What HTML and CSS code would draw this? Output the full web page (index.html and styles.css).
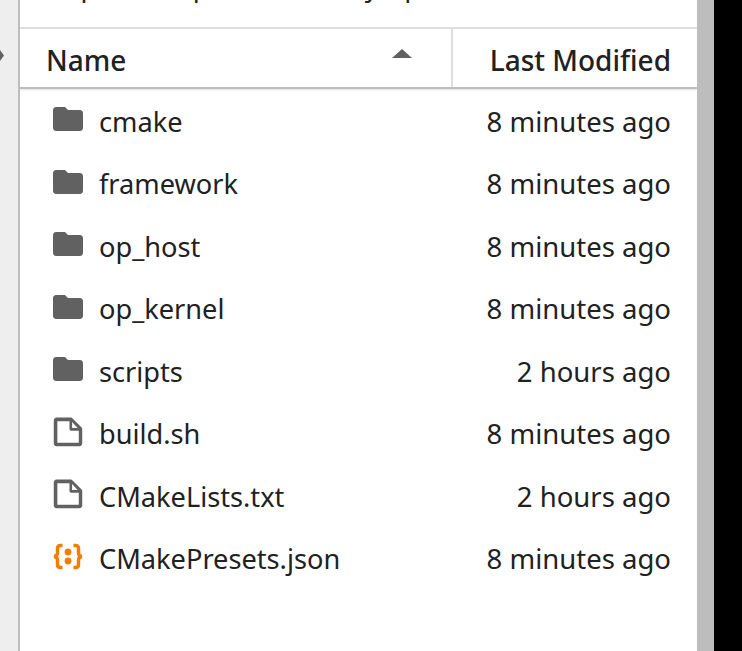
FILE: index.html
```html
<!DOCTYPE html>
<html lang="en">
<head>
    <meta charset="UTF-8">
    <title>File Browser</title>
    <link rel="stylesheet" href="styles.css">
</head>
<body>
    <svg class="icon-defs" width="0" height="0">
        <symbol id="icon-folder" viewBox="0 0 24 24">
            <path d="M10 4H4c-1.1 0-1.99.9-1.99 2L2 18c0 1.1.9 2 2 2h16c1.1 0 2-.9 2-2V8c0-1.1-.9-2-2-2h-8l-2-2z"/>
        </symbol>
        <symbol id="icon-file" viewBox="0 0 22 22">
            <path d="M19.3 8.2l-5.5-5.5c-.3-.3-.7-.5-1.2-.5H3.9c-.8.1-1.6.9-1.6 1.8v14.1c0 .9.7 1.6 1.6 1.6h14.2c.9 0 1.6-.7 1.6-1.6V9.4c.1-.5-.1-.9-.4-1.2zm-5.8-3.3l3.4 3.6h-3.4V4.9zm3.9 12.7H4.7c-.1 0-.2 0-.2-.2V4.7c0-.2.1-.3.2-.3h7.2v4.400s0 .8.3 1.1c.3.3 1.1.3 1.1.3h4.3v7.2s-.1.2-.2.2z"/>
        </symbol>
        <symbol id="icon-json" viewBox="0 0 36 36">
            <path class="brace" d="M12.500 6.500H10.500c-2 0-3 1.100-3 3v4.200c0 2.100-1.100 3.600-3.500 3.800 2.400.2 3.500 1.700 3.500 3.800v4.200c0 1.900 1 3 3 3h2"/>
            <path class="brace" d="M23.500 6.500h2c2 0 3 1.100 3 3v4.200c0 2.100 1.100 3.600 3.500 3.800-2.400.2-3.500 1.700-3.500 3.800v4.200c0 1.900-1 3-3 3h-2"/>
            <circle cx="18" cy="13" r="3.400"/>
            <circle cx="18" cy="22" r="3.400"/>
        </symbol>
    </svg>

    <div class="sidebar">
        <span class="collapse-arrow"></span>
    </div>

    <div class="browser">
        <div class="breadcrumbs">
            <div class="crumb-text">/ op / examples / memory / p</div>
        </div>

        <div class="list-header">
            <div class="col-name">
                <span>Name</span>
                <span class="sort-caret"></span>
            </div>
            <div class="col-modified">Last Modified</div>
        </div>

        <ul class="file-list">
            <li class="file-row">
                <svg class="file-icon"><use href="#icon-folder"/></svg>
                <span class="file-name">cmake</span>
                <span class="file-date">8 minutes ago</span>
            </li>
            <li class="file-row">
                <svg class="file-icon"><use href="#icon-folder"/></svg>
                <span class="file-name">framework</span>
                <span class="file-date">8 minutes ago</span>
            </li>
            <li class="file-row">
                <svg class="file-icon"><use href="#icon-folder"/></svg>
                <span class="file-name">op_host</span>
                <span class="file-date">8 minutes ago</span>
            </li>
            <li class="file-row">
                <svg class="file-icon"><use href="#icon-folder"/></svg>
                <span class="file-name">op_kernel</span>
                <span class="file-date">8 minutes ago</span>
            </li>
            <li class="file-row">
                <svg class="file-icon"><use href="#icon-folder"/></svg>
                <span class="file-name">scripts</span>
                <span class="file-date">2 hours ago</span>
            </li>
            <li class="file-row">
                <svg class="file-icon"><use href="#icon-file"/></svg>
                <span class="file-name">build.sh</span>
                <span class="file-date">8 minutes ago</span>
            </li>
            <li class="file-row">
                <svg class="file-icon"><use href="#icon-file"/></svg>
                <span class="file-name">CMakeLists.txt</span>
                <span class="file-date">2 hours ago</span>
            </li>
            <li class="file-row">
                <svg class="file-icon icon-orange"><use href="#icon-json"/></svg>
                <span class="file-name">CMakePresets.json</span>
                <span class="file-date">8 minutes ago</span>
            </li>
        </ul>
    </div>

    <div class="scrollbar"></div>
    <div class="outside"></div>
</body>
</html>
```

FILE: styles.css
```css
html, body {
    height: 100%;
}
body {
    margin: 0;
    display: flex;
    overflow: hidden;
    font-family: "Noto Sans", "Open Sans", sans-serif;
    font-size: 27.2px;
    color: #212121;
    background-color: #fff;
}
.icon-defs {
    position: absolute;
}
.sidebar {
    position: relative;
    width: 18px;
    background-color: #eeeeee;
    border-right: 2px solid #bdbdbd;
}
.collapse-arrow {
    position: absolute;
    left: -6px;
    top: 50px;
    width: 10px;
    height: 11px;
    background-color: #616161;
    clip-path: polygon(0 0, 60% 0, 100% 50%, 60% 100%, 0 100%);
}
.browser {
    flex: 1;
    min-width: 0;
}
.breadcrumbs {
    height: 27px;
    overflow: hidden;
    border-bottom: 2px solid #e0e0e0;
}
.crumb-text {
    margin-top: -32px;
    padding-left: 26px;
    line-height: 36px;
    word-spacing: 0.8px;
    white-space: nowrap;
}
.list-header {
    display: flex;
    height: 58px;
    border-bottom: 2px solid #bdbdbd;
    box-shadow: 0 1px 2px rgba(0, 0, 0, 0.12);
    font-size: 28px;
    font-weight: 500;
}
.col-name {
    flex: 1;
    display: flex;
    align-items: center;
    justify-content: space-between;
    padding: 4px 39px 0 26px;
    border-right: 2px solid #e0e0e0;
}
.sort-caret {
    width: 0;
    height: 0;
    margin-bottom: 14px;
    border-left: 10px solid transparent;
    border-right: 10px solid transparent;
    border-bottom: 9px solid #616161;
}
.col-modified {
    display: flex;
    align-items: center;
    justify-content: flex-end;
    width: 244px;
    box-sizing: border-box;
    padding: 4px 26px 0 0;
}
.file-list {
    list-style: none;
    margin: 1px 0 0;
    padding: 0;
}
.file-row {
    display: flex;
    align-items: center;
    height: 62.5px;
    padding: 0 26px 0 30px;
}
.file-icon {
    width: 36px;
    height: 36px;
    margin-top: -4px;
    fill: #616161;
}
.icon-orange {
    fill: #f57c00;
}
.brace {
    fill: none;
    stroke: #f57c00;
    stroke-width: 3.4;
}
.file-name {
    flex: 1;
    margin-left: 13px;
}
.file-date {
    font-size: 27.5px;
}
.scrollbar {
    width: 17px;
    background-color: #bdbdbd;
}
.outside {
    width: 28px;
    background-color: #000;
}
```
